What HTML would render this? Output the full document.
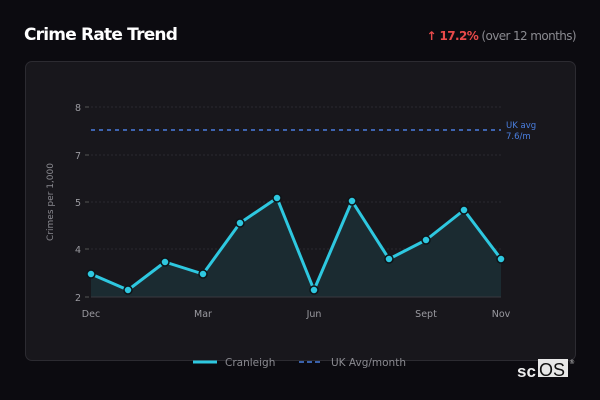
<!DOCTYPE html>
<html><head><style>
html,body{margin:0;padding:0;width:600px;height:400px;background:#0c0b10;overflow:hidden;font-family:"Liberation Sans","DejaVu Sans",sans-serif}
.t{position:absolute;left:24px;top:25px;color:#fff;font-size:17px;font-weight:bold;font-family:"DejaVu Sans","Liberation Sans",sans-serif;letter-spacing:-0.8px}
.r{position:absolute;right:24px;top:29px;font-size:12px;color:#8a8a90;font-family:"DejaVu Sans",sans-serif;letter-spacing:-0.6px}
.r b{color:#e84a4a}
.card{position:absolute;left:25px;top:61px;width:549px;height:298px;background:#18171c;border:1px solid #2c2b31;border-radius:7px}
svg{position:absolute;left:0;top:0}
</style></head><body>
<div class="t">Crime Rate Trend</div>
<div class="r"><b>↑ 17.2%</b> (over 12 months)</div>
<div class="card"></div>
<svg width="600" height="400" font-family="DejaVu Sans, sans-serif">
<g stroke="#2a292f" stroke-dasharray="2,2" stroke-width="1">
<line x1="91" y1="107" x2="501" y2="107"/><line x1="91" y1="155" x2="501" y2="155"/><line x1="91" y1="202" x2="501" y2="202"/><line x1="91" y1="249" x2="501" y2="249"/>
</g>
<g stroke="#555" stroke-width="1"><line x1="85" y1="107" x2="89" y2="107"/><line x1="85" y1="155" x2="89" y2="155"/><line x1="85" y1="202" x2="89" y2="202"/><line x1="85" y1="249" x2="89" y2="249"/><line x1="85" y1="297" x2="89" y2="297"/></g>
<g fill="#9a9aa0" font-size="9.5" text-anchor="end"><text x="81" y="111">8</text><text x="81" y="159">7</text><text x="81" y="206">5</text><text x="81" y="253">4</text><text x="81" y="301">2</text></g>
<text transform="translate(53,202) rotate(-90)" fill="#8a8a90" font-size="9" text-anchor="middle">Crimes per 1,000</text>
<line x1="91" y1="130" x2="501" y2="130" stroke="#4a7fe0" stroke-width="1.5" stroke-dasharray="4,4"/>
<text x="506" y="128" fill="#4a7fe0" font-size="8.5">UK avg</text><text x="506" y="139" fill="#4a7fe0" font-size="8.5">7.6/m</text>
<polygon fill="#1b2b31" points="91,297 91,274 128,290 165,262 203,274 240,223 277,198 314,290 352,201 389,259 426,240 464,210 501,259 501,297"/>
<line x1="91" y1="297" x2="501" y2="297" stroke="#3a3a40"/>
<polyline fill="none" stroke="#2ec8e0" stroke-width="3" stroke-linejoin="round" points="91,274 128,290 165,262 203,274 240,223 277,198 314,290 352,201 389,259 426,240 464,210 501,259"/>
<g fill="#2ec8e0" stroke="#0e1418" stroke-width="1.5">
<circle cx="91" cy="274" r="4"/><circle cx="128" cy="290" r="4"/><circle cx="165" cy="262" r="4"/><circle cx="203" cy="274" r="4"/><circle cx="240" cy="223" r="4"/><circle cx="277" cy="198" r="4"/><circle cx="314" cy="290" r="4"/><circle cx="352" cy="201" r="4"/><circle cx="389" cy="259" r="4"/><circle cx="426" cy="240" r="4"/><circle cx="464" cy="210" r="4"/><circle cx="501" cy="259" r="4"/>
</g>
<g fill="#9a9aa0" font-size="9.5" text-anchor="middle"><text x="91" y="317">Dec</text><text x="203" y="317">Mar</text><text x="314" y="317">Jun</text><text x="426" y="317">Sept</text><text x="501" y="317">Nov</text></g>
<line x1="193" y1="362" x2="217" y2="362" stroke="#2ec8e0" stroke-width="3"/>
<text x="225" y="366" fill="#8a8a90" font-size="10.5">Cranleigh</text>
<line x1="299" y1="362" x2="323" y2="362" stroke="#4a7fe0" stroke-width="1.5" stroke-dasharray="5,3"/>
<text x="331" y="366" fill="#8a8a90" font-size="10.5">UK Avg/month</text>
<text x="517" y="377" fill="#eee" font-size="17" font-family="Liberation Sans, sans-serif" font-weight="bold">sc</text>
<rect x="538" y="359" width="30" height="18" fill="#e8e8e8"/>
<text x="539" y="376" fill="#111" font-size="18" font-family="Liberation Sans, sans-serif">OS</text>
<text x="569" y="364" fill="#ccc" font-size="6">®</text>
</svg>
</body></html>
